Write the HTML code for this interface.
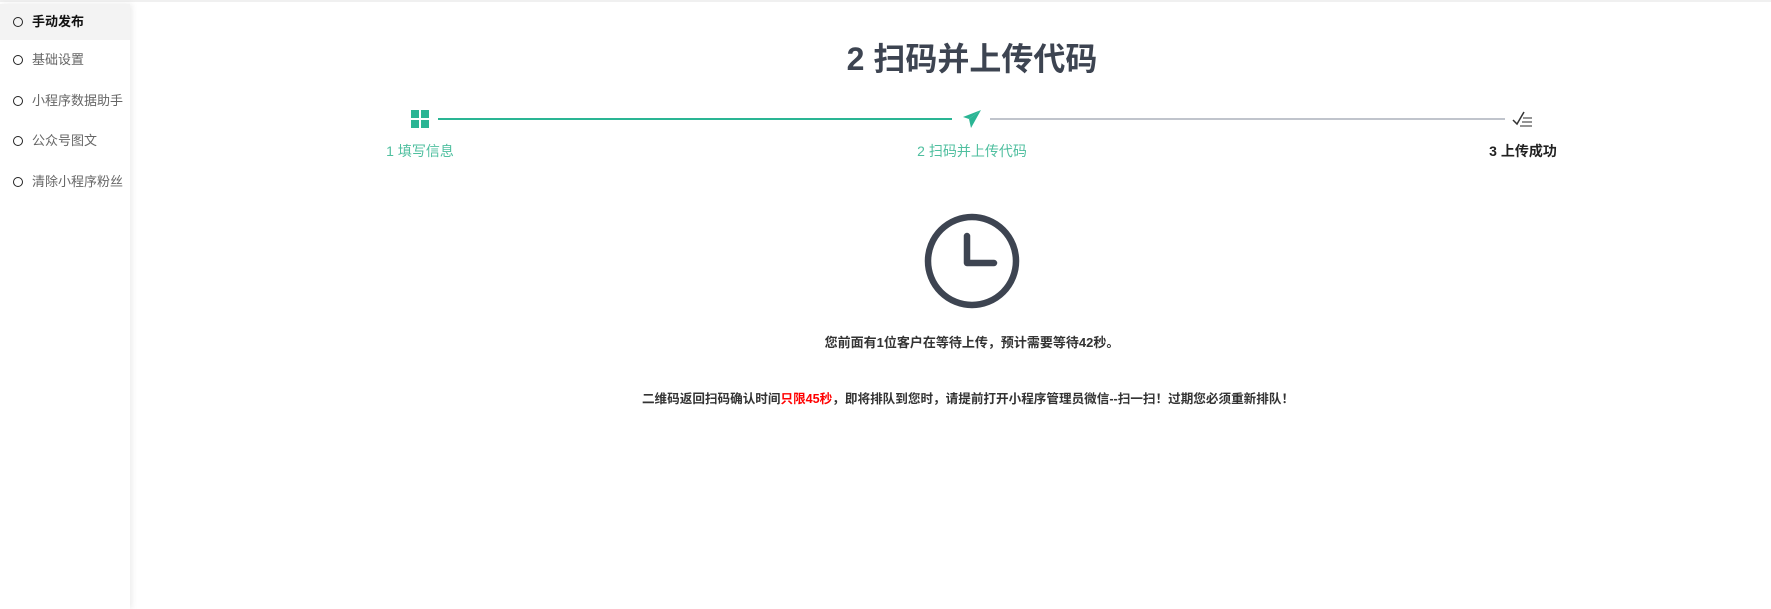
<!DOCTYPE html>
<html><head><meta charset="utf-8"><style>
body{margin:0;width:1771px;height:609px;background:#fff;font-family:"Liberation Sans","Noto Sans CJK SC",sans-serif;position:relative;overflow:hidden}
.top{position:absolute;left:0;top:0;width:1771px;height:2px;background:#f0f0f0}
.side{position:absolute;left:0;top:4px;width:130px;height:605px;background:#fff;box-shadow:2px 0 6px rgba(0,0,0,.08)}
.it{position:absolute;left:0;width:130px;height:36px;line-height:36px;font-size:13px;color:#666}
.it i{position:absolute;left:13px;top:13px;width:8px;height:8px;border:1.5px solid #222;border-radius:50%}
.it span{position:absolute;left:32px}
.act{background:#f3f3f3;color:#111;font-weight:bold}
.t{position:absolute;white-space:nowrap;transform:translateX(-50%)}
</style></head><body>
<div class="top"></div>
<div class="side">
<div class="it act" style="top:0"><i></i><span>手动发布</span></div>
<div class="it" style="top:38px"><i></i><span>基础设置</span></div>
<div class="it" style="top:79px"><i></i><span>小程序数据助手</span></div>
<div class="it" style="top:119px"><i></i><span>公众号图文</span></div>
<div class="it" style="top:160px"><i></i><span>清除小程序粉丝</span></div>
</div>
<div class="t" style="left:972px;top:34px;font-size:32px;font-weight:bold;color:#3d4451">2 扫码并上传代码</div>
<svg style="position:absolute;left:411px;top:110px" width="18" height="18"><rect x="0" y="0" width="8" height="8" fill="#2ab594"/><rect x="10" y="0" width="8" height="8" fill="#2ab594"/><rect x="0" y="10" width="8" height="8" fill="#2ab594"/><rect x="10" y="10" width="8" height="8" fill="#2ab594"/></svg>
<div style="position:absolute;left:438px;top:118px;width:514px;height:2px;background:#2ab594"></div>
<svg style="position:absolute;left:962px;top:109px" width="20" height="20" viewBox="0 0 20 20"><path d="M19 1 L1 8 L7 10 Z" fill="#2ab594"/><path d="M19 1 L7 10 L9 19 Z" fill="#2ab594"/></svg>
<div style="position:absolute;left:990px;top:118px;width:515px;height:2px;background:#c0c4cc"></div>
<svg style="position:absolute;left:1512px;top:110px" width="22" height="18"><path d="M1 10 L5 14 L12 2" stroke="#333" stroke-width="1.5" fill="none"/><path d="M11 8 H20 M10 12 H20 M8 16 H20" stroke="#555" stroke-width="1.3"/></svg>
<div class="t" style="left:420px;top:141px;font-size:14px;color:#4fbf9f">1 填写信息</div>
<div class="t" style="left:972px;top:141px;font-size:14px;color:#4fbf9f">2 扫码并上传代码</div>
<div class="t" style="left:1523px;top:141px;font-size:14px;color:#222;font-weight:bold">3 上传成功</div>
<svg style="position:absolute;left:920px;top:209px" width="104" height="104"><circle cx="52" cy="52" r="44" stroke="#3d4451" stroke-width="6.5" fill="none"/><path d="M47 27 V54 H74" stroke="#3d4451" stroke-width="6.5" fill="none" stroke-linecap="round" stroke-linejoin="round"/></svg>
<div class="t" style="left:972px;top:332px;font-size:13px;font-weight:bold;color:#333">您前面有1位客户在等待上传，预计需要等待42秒。</div>
<div class="t" style="left:968px;top:388px;font-size:12.6px;font-weight:bold;color:#333">二维码返回扫码确认时间<span style="color:#f00">只限45秒</span>，即将排队到您时，请提前打开小程序管理员微信--扫一扫！过期您必须重新排队！</div>
</body></html>
